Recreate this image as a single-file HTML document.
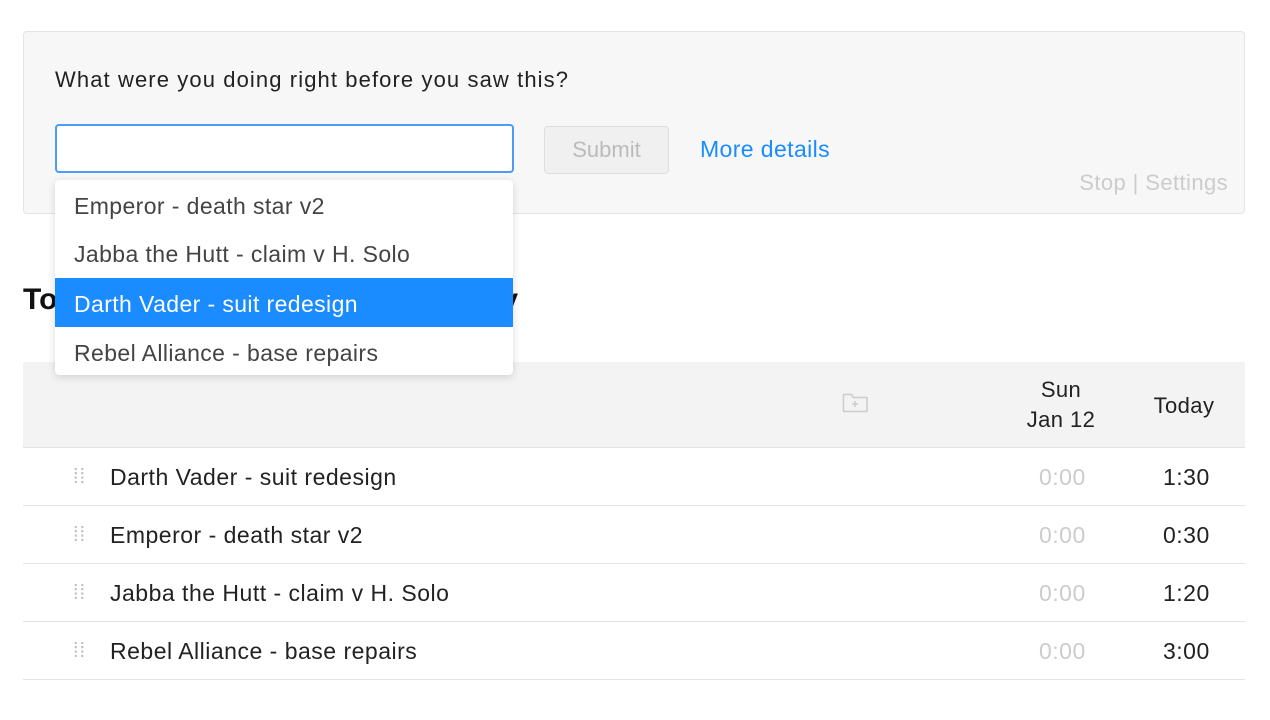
<!DOCTYPE html>
<html><head><style>
body{margin:0;width:1270px;height:720px;background:#fff;font-family:"Liberation Sans",sans-serif;position:relative;overflow:hidden;color:#222}
.a{position:absolute}
.panel{left:23px;top:31px;width:1220px;height:181px;background:#f7f7f7;border:1px solid #e4e4e4;border-radius:4px}
.row{left:23px;width:1222px;height:57px;border-bottom:1px solid #e3e3e3;font-size:23px;letter-spacing:.5px}
.row span{position:absolute;top:16px}
.h{color:#bbb;font-size:20px;line-height:5px;letter-spacing:1px}
</style></head><body>
<div class="a panel"></div>
<div class="a" style="left:55px;top:67px;font-size:22px;letter-spacing:1.1px;color:#222">What were you doing right before you saw this?</div>
<div class="a" style="left:55px;top:124px;width:455px;height:45px;border:2px solid #4a9cf5;border-radius:4px;background:#fff"></div>
<div class="a" style="left:544px;top:126px;width:123px;height:46px;border:1px solid #ddd;border-radius:4px;background:#f0f0f0;color:#bbb;font-size:22px;text-align:center;line-height:46px">Submit</div>
<div class="a" style="left:700px;top:136px;font-size:23px;letter-spacing:.4px;color:#1a8cff">More details</div>
<div class="a" style="right:42px;top:170px;font-size:22px;letter-spacing:.4px;color:#ccc">Stop | Settings</div>
<div class="a" style="left:23px;top:283px;width:495px;font-size:30px;font-weight:bold;color:#111;text-align:justify;text-align-last:justify;white-space:nowrap">Today's time tracking summary</div>
<div class="a" style="left:23px;top:362px;width:1222px;height:85px;background:#f3f3f3;border-bottom:1px solid #e3e3e3"></div>
<svg class="a" style="left:842px;top:391px" width="28" height="24" viewBox="0 0 28 24"><path d="M1.5 3.5h8l2 3h13.5v14h-23.5z" fill="none" stroke="#ccc" stroke-width="1.5"/><path d="M13 10v6M10 13h6" stroke="#ccc" stroke-width="1.5"/></svg>
<div class="a" style="left:1011px;top:375px;width:100px;text-align:center;font-size:22px;line-height:30px;letter-spacing:.4px">Sun<br>Jan 12</div>
<div class="a" style="left:1134px;top:393px;width:100px;text-align:center;font-size:22px;letter-spacing:.4px">Today</div>
<div class="a row" style="top:448px"><span class="h" style="left:50px;top:27px">⁞⁞</span><span style="left:87px">Darth Vader - suit redesign</span><span style="left:1016px;color:#ccc">0:00</span><span style="left:1140px">1:30</span></div>
<div class="a row" style="top:506px"><span class="h" style="left:50px;top:27px">⁞⁞</span><span style="left:87px">Emperor - death star v2</span><span style="left:1016px;color:#ccc">0:00</span><span style="left:1140px">0:30</span></div>
<div class="a row" style="top:564px"><span class="h" style="left:50px;top:27px">⁞⁞</span><span style="left:87px">Jabba the Hutt - claim v H. Solo</span><span style="left:1016px;color:#ccc">0:00</span><span style="left:1140px">1:20</span></div>
<div class="a row" style="top:622px"><span class="h" style="left:50px;top:27px">⁞⁞</span><span style="left:87px">Rebel Alliance - base repairs</span><span style="left:1016px;color:#ccc">0:00</span><span style="left:1140px">3:00</span></div>
<div class="a" style="left:55px;top:180px;width:458px;height:195px;background:#fff;border-radius:4px;box-shadow:0 2px 8px rgba(0,0,0,.15);font-size:23px;letter-spacing:.4px;color:#444">
<div style="height:49px;line-height:52px;padding-left:19px">Emperor - death star v2</div>
<div style="height:49px;line-height:50px;padding-left:19px">Jabba the Hutt - claim v H. Solo</div>
<div style="height:49px;line-height:52px;padding-left:19px;background:#1a8cff;color:#fff">Darth Vader - suit redesign</div>
<div style="height:48px;line-height:52px;padding-left:19px">Rebel Alliance - base repairs</div>
</div>
</body></html>
